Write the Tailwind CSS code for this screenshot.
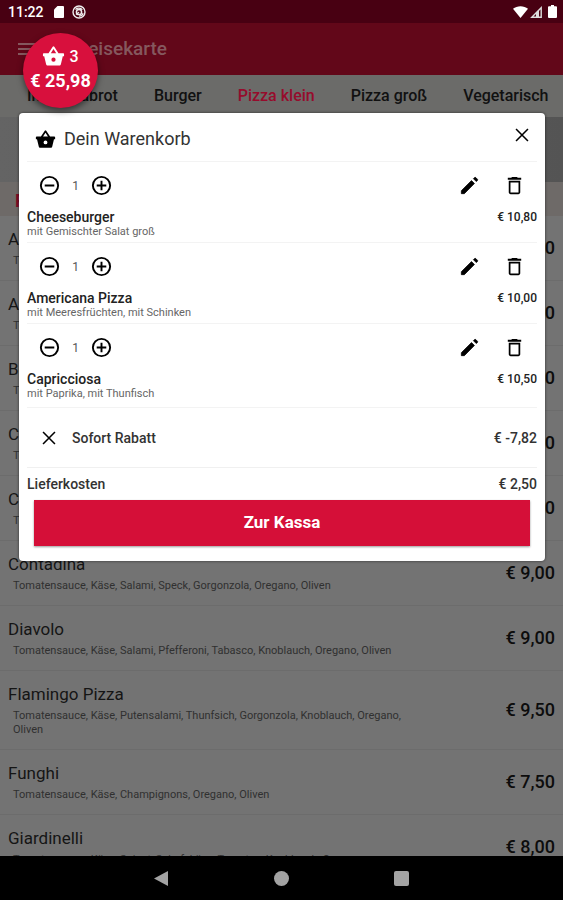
<!DOCTYPE html>
<html lang="de">
<head>
<meta charset="utf-8">
<meta name="viewport" content="width=device-width, initial-scale=1">
<title>Speisekarte</title>
<script src="https://cdn.jsdelivr.net/npm/@tailwindcss/browser@4"></script>
</head>
<body class="bg-black font-[Roboto,sans-serif] text-black">
<svg class="hidden" aria-hidden="true">
  <symbol id="basket" viewBox="0 0 24 24"><path fill="currentColor" d="M17.21 8.500l-4.380-6.560a1 1 0 0 0-1.660 0L6.790 8.500H2c-.55 0-1 .45-1 1v2.200h1.300l2 8.300c.2.900.8 1.500 1.700 1.500h12c.9 0 1.500-.6 1.700-1.500l2-8.300H23V9.500c0-.55-.45-1-1-1h-4.790zM9.200 8.500L12 4.300l2.800 4.200H9.200zM12 17.500a2.200 2.200 0 1 1 0-4.400 2.200 2.200 0 0 1 0 4.400z"/></symbol>
  <symbol id="minus" viewBox="0 0 24 24"><path fill="currentColor" d="M7 11v2h10v-2H7zm5-9a10 10 0 1 0 0 20 10 10 0 0 0 0-20zm0 18a8 8 0 1 1 0-16 8 8 0 0 1 0 16z"/></symbol>
  <symbol id="plus" viewBox="0 0 24 24"><path fill="currentColor" d="M13 7h-2v4H7v2h4v4h2v-4h4v-2h-4V7zm-1-5a10 10 0 1 0 0 20 10 10 0 0 0 0-20zm0 18a8 8 0 1 1 0-16 8 8 0 0 1 0 16z"/></symbol>
  <symbol id="edit" viewBox="0 0 24 24"><path fill="currentColor" stroke="currentColor" stroke-width=".8" stroke-linejoin="round" d="M3.500 17.400V20.500h3.100L17.100 9.900l-3-3L3.500 17.400zM20.300 6.700a1 1 0 0 0 0-1.200l-1.800-1.800a1 1 0 0 0-1.200 0l-1.200 1.200 3 3 1.200-1.200z"/></symbol>
  <symbol id="trash" viewBox="0 0 24 24"><path fill="currentColor" d="M6 19c0 1.100.9 2 2 2h8c1.100 0 2-.9 2-2V7H6v12zM7.800 8.800h8.400v10.400H7.800V8.800zM15.500 4l-1-1h-5l-1 1H5v2h14V4h-3.500z"/></symbol>
  <symbol id="close" viewBox="0 0 24 24"><path fill="none" stroke="currentColor" stroke-width="1.700" d="M5.500 5.500l13 13M18.500 5.500l-13 13"/></symbol>
</svg>

<div class="relative flex h-screen flex-col overflow-hidden">
  <div class="flex h-[23px] shrink-0 items-center bg-[#480012] pr-[6px] pl-2 text-white">
    <span class="text-sm leading-none font-medium">11:22</span>
    <svg class="ml-[9px] size-3" viewBox="0 0 12 12" aria-hidden="true"><path fill="#fff" d="M4.500 0H10a1 1 0 0 1 1 1v10a1 1 0 0 1-1 1H2a1 1 0 0 1-1-1V3.500z"/></svg>
    <svg class="ml-[7px] size-[14px]" viewBox="0 0 14 14" fill="none" stroke="#eee" aria-hidden="true"><circle cx="7" cy="7" r="6" stroke-width="1.400"/><circle cx="7" cy="7" r="2.600" stroke-width="1.500"/><path stroke-width="1.200" d="M3.500 4.500C5 2.800 9 2.600 10.300 5M4 9.500l3-2.300M7 11.200c2 0 3.700-1 4-3"/></svg>
    <svg class="ml-auto h-3 w-[15px]" viewBox="0 0 15 12" aria-hidden="true"><path fill="#fff" d="M0 2.800C4-.7 11-.7 15 2.800L7.500 12z"/></svg>
    <svg class="ml-[2px] size-3" viewBox="0 0 12 12" aria-hidden="true"><path fill="none" stroke="#ddd" stroke-width="1.400" d="M1.800 11.200L11.200 1.800v9.400z"/><path fill="#ddd" d="M6 7l3-3v7H6z"/></svg>
    <svg class="ml-[6px] h-[13px] w-[9px]" viewBox="0 0 9 13" aria-hidden="true"><path fill="#fff" d="M3 0h3v1.300h2a1 1 0 0 1 1 1V12a1 1 0 0 1-1 1H1a1 1 0 0 1-1-1V2.300a1 1 0 0 1 1-1h2z"/></svg>
  </div>

  <header class="flex h-[52px] shrink-0 items-center bg-[#620719] pl-[18px] text-[#85585e]">
    <button aria-label="Menü" class="flex w-[18px] flex-col gap-[3px]"><span class="h-[2px] bg-current"></span><span class="h-[2px] bg-current"></span><span class="h-[2px] bg-current"></span></button>
    <h1 class="ml-[30px] text-[19px] font-medium">Speisekarte</h1>
  </header>

  <nav class="flex h-[42px] shrink-0 items-center gap-9 bg-[#6b6b69] pl-[27px] text-base font-medium whitespace-nowrap text-[#111]">
    <a href="#">Ihr Pizzabrot</a>
    <a href="#">Burger</a>
    <a href="#" class="text-[#960c2c]">Pizza klein</a>
    <a href="#">Pizza groß</a>
    <a href="#">Vegetarisch</a>
  </nav>

  <main class="min-h-0 flex-1 overflow-hidden bg-[#737373]">
    <div class="h-[65px] bg-linear-to-r from-[#646464] to-[#545454]"></div>
    <h2 class="flex h-[34px] items-center bg-[#6e6a68] pt-1 pl-[15px] text-lg font-bold text-[#800a24]">Pizza klein</h2>
    <ul id="menu"></ul>
  </main>

  <footer class="flex h-11 shrink-0 items-center justify-center gap-[105px] bg-black">
    <button aria-label="Zurück" class="size-[15px]"><svg viewBox="0 0 15 15"><path fill="#a3a3a3" d="M0 7.500L14 0v15z"/></svg></button>
    <button aria-label="Startseite" class="size-[15px] rounded-full bg-[#a3a3a3]"></button>
    <button aria-label="Übersicht" class="size-[15px] rounded-[2px] bg-[#a3a3a3]"></button>
  </footer>

  <section role="dialog" aria-labelledby="cart-title" class="absolute top-[113px] right-[18px] left-[19px] rounded-[4px] bg-white px-2 pb-[15px] shadow-[0_0_3px_rgba(0,0,0,0.6)]">
    <div class="flex h-[49px] items-center border-b border-[#f3f3f3] pt-1 pr-1 pl-2">
      <svg class="size-[21px]"><use href="#basket"/></svg>
      <h2 id="cart-title" class="ml-2 text-lg text-[#333]">Dein Warenkorb</h2>
      <button aria-label="Schließen" class="mb-2 ml-auto"><svg class="size-[22px]"><use href="#close"/></svg></button>
    </div>
    <ul id="cart"></ul>
    <div class="flex h-[60px] items-center border-b border-[#f0f0f0] pl-[11px] text-sm font-medium text-[#333]">
      <button aria-label="Rabatt entfernen"><svg class="size-[22px] text-black"><use href="#close"/></svg></button>
      <span class="ml-3">Sofort Rabatt</span>
      <span class="ml-auto">€ -7,82</span>
    </div>
    <div class="flex h-8 items-center justify-between text-sm font-medium text-[#333]"><span>Lieferkosten</span><span>€ 2,50</span></div>
    <div class="px-[7px]"><button class="h-[46px] w-full bg-[#d50f38] text-[17px] font-bold text-white shadow-[0_1px_2px_rgba(0,0,0,0.4)]">Zur Kassa</button></div>
  </section>

  <button aria-label="Warenkorb, 3 Artikel" class="absolute top-[33px] left-[23px] flex size-[75px] flex-col items-center justify-center rounded-full bg-[#d8103d] pb-1 text-white shadow-[0_3px_6px_rgba(0,0,0,0.5)]">
    <span class="flex items-center gap-1 text-base leading-6 font-medium"><svg class="size-[23px]"><use href="#basket"/></svg>3</span>
    <span class="text-lg leading-6 font-bold">€ 25,98</span>
  </button>
</div>

<script>
const dishes = [
  ["Al Capone", "Tomatensauce, Käse, Schinken, Oregano", "8,50"],
  ["Americana", "Tomatensauce, Käse, Schinken, Mais", "9,00"],
  ["Bolognese", "Tomatensauce, Käse, Fleischsauce", "9,00"],
  ["Calzone", "Tomatensauce, Käse, Schinken, Oregano", "9,00"],
  ["Capricciosa", "Tomatensauce, Käse, Schinken, Oliven", "9,00"],
  ["Contadina", "Tomatensauce, Käse, Salami, Speck, Gorgonzola, Oregano, Oliven", "9,00"],
  ["Diavolo", "Tomatensauce, Käse, Salami, Pfefferoni, Tabasco, Knoblauch, Oregano, Oliven", "9,00"],
  ["Flamingo Pizza", "Tomatensauce, Käse, Putensalami, Thunfsich, Gorgonzola, Knoblauch, Oregano, Oliven", "9,50"],
  ["Funghi", "Tomatensauce, Käse, Champignons, Oregano, Oliven", "7,50"],
  ["Giardinelli", "Tomatensauce, Käse, Spinat, Schafskäse, Tomaten, Knoblauch, Oregano", "8,00"]
];
document.getElementById("menu").innerHTML = dishes.map(([name, text, price]) => `
  <li class="flex items-center justify-between border-b border-[#6c6c6c] px-2">
    <div class="max-w-[410px] pt-3 pb-3">
      <h3 class="text-[17px] leading-[22px] text-[#151515]">${name}</h3>
      <p class="mt-1 pl-[5px] text-[11px] leading-[14px] text-[#303030]">${text}</p>
    </div>
    <span class="text-lg font-medium whitespace-nowrap text-[#0c0c0c]">€ ${price}</span>
  </li>`).join("");

const items = [
  ["Cheeseburger", "mit Gemischter Salat groß", "10,80"],
  ["Americana Pizza", "mit Meeresfrüchten, mit Schinken", "10,00"],
  ["Capricciosa", "mit Paprika, mit Thunfisch", "10,50"]
];
document.getElementById("cart").innerHTML = items.map(([name, text, price]) => `
  <li class="border-b border-[#f3f3f3] pb-1 last:pb-[7px]">
    <div class="flex h-[47px] items-center px-[11px]">
      <button aria-label="Weniger"><svg class="size-[23px]"><use href="#minus"/></svg></button>
      <span class="w-[29px] text-center text-xs text-[#555]">1</span>
      <button aria-label="Mehr"><svg class="size-[23px]"><use href="#plus"/></svg></button>
      <button aria-label="Bearbeiten" class="ml-auto"><svg class="size-[23px]"><use href="#edit"/></svg></button>
      <button aria-label="Löschen" class="ml-[22px]"><svg class="size-[23px]"><use href="#trash"/></svg></button>
    </div>
    <div class="flex items-center justify-between">
      <h3 class="text-sm leading-4 font-medium text-[#222]">${name}</h3>
      <span class="text-xs leading-4 font-medium text-[#222]">€ ${price}</span>
    </div>
    <p class="text-[11px] leading-[13px] text-[#666]">${text}</p>
  </li>`).join("");
</script>
</body>
</html>
